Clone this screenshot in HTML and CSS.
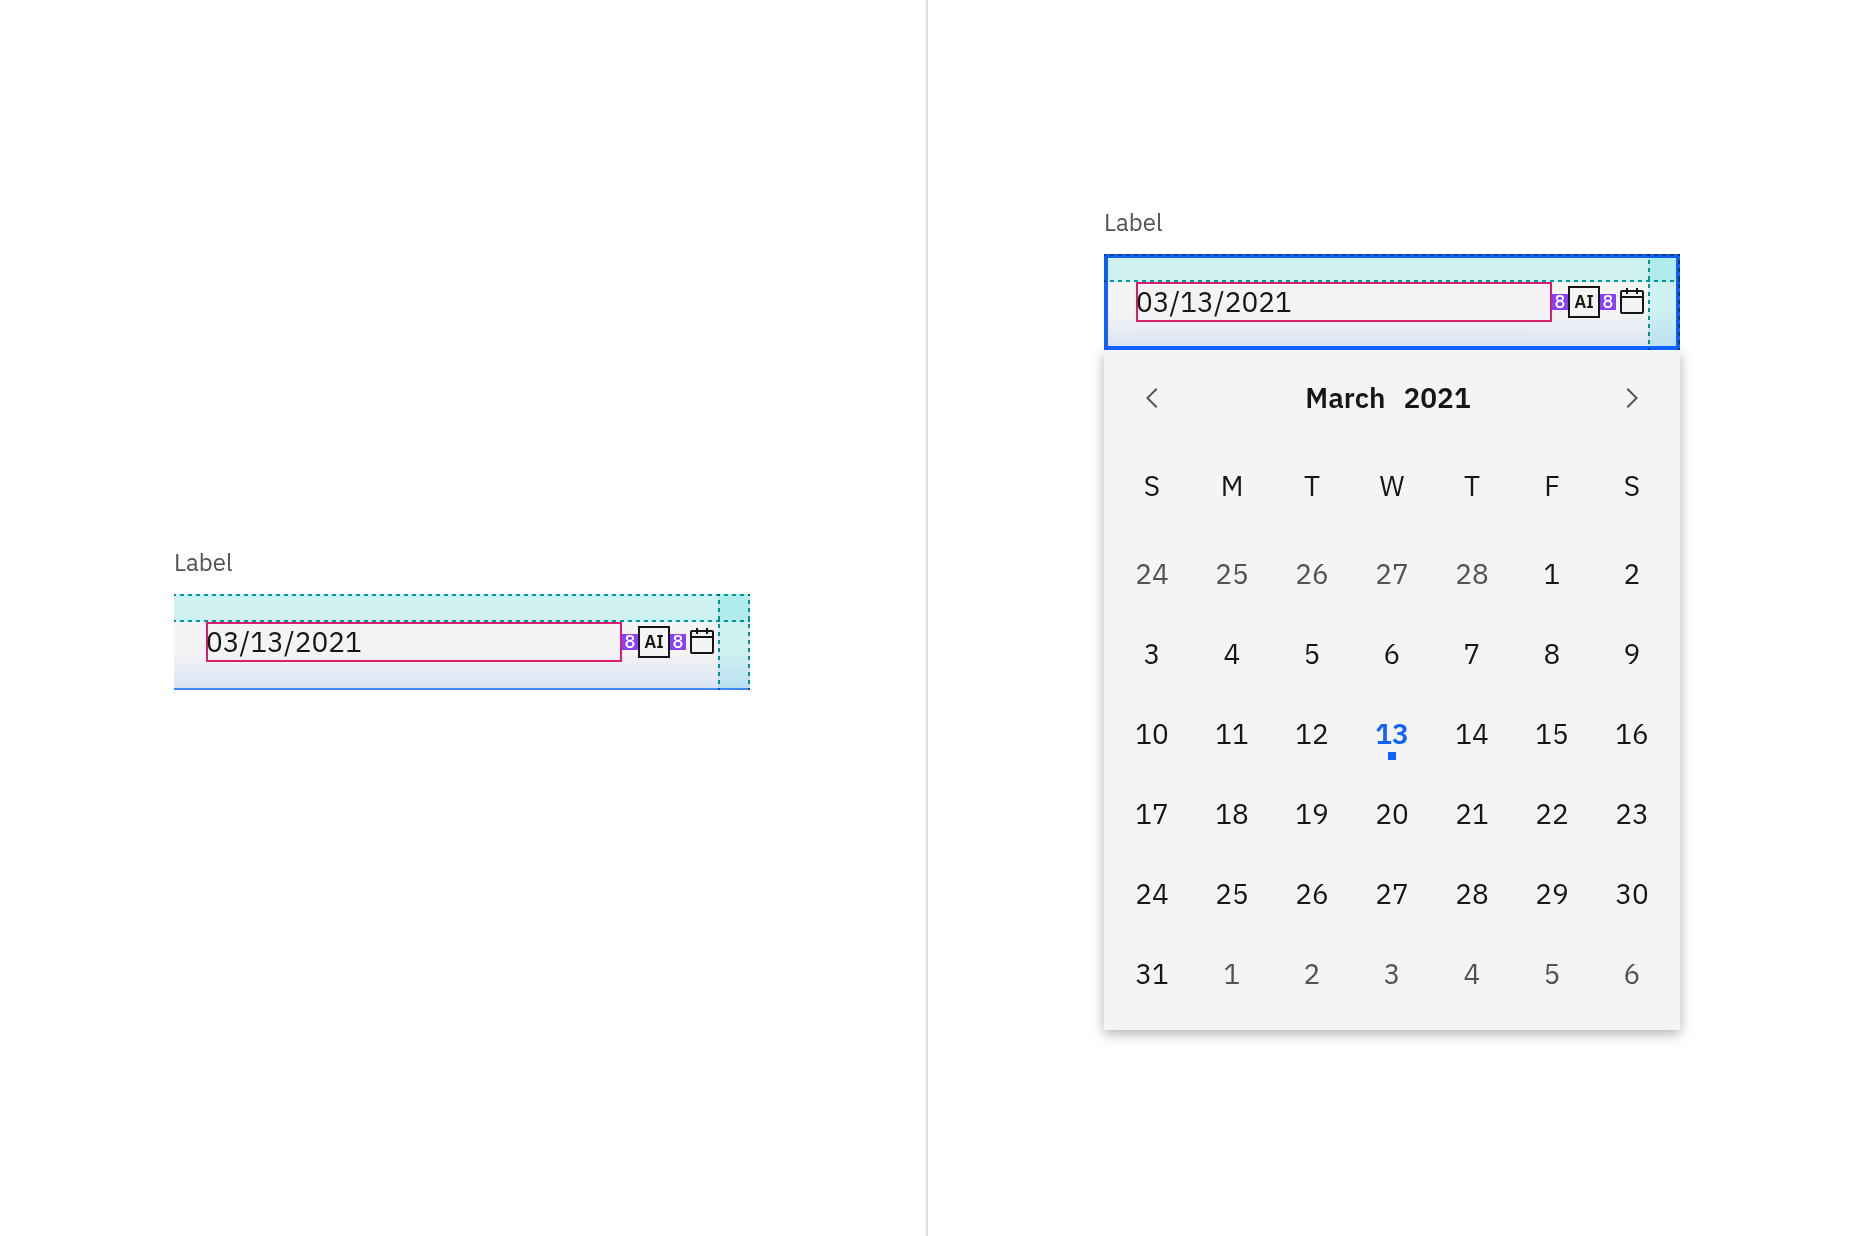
FILE: index.html
```html
<!DOCTYPE html>
<html lang="en">
<head>
<meta charset="utf-8">
<title>Date picker with AI label</title>
<link rel="stylesheet" href="styles.css">
</head>
<body>
<main class="panes">
  <section class="pane">
    <div class="picker">
      <label class="picker-label" for="date-closed">Label</label>
      <div class="field">
        <input class="date" id="date-closed" type="text" value="03/13/2021">
        <span class="space">8</span>
        <button class="ai" type="button">AI</button>
        <span class="space">8</span>
        <button class="open" type="button" aria-label="Open calendar">
          <svg viewBox="0 0 32 32" width="32" height="32"><path d="M26,4h-4V2h-2v2h-8V2h-2v2H6C4.9,4,4,4.9,4,6v20c0,1.1,0.9,2,2,2h20c1.1,0,2-0.9,2-2V6C28,4.9,27.1,4,26,4z M26,26H6V12h20V26z M26,10H6V6h4v2h2V6h8v2h2V6h4V10z"/></svg>
        </button>
        <span class="guide guide-top"></span>
        <span class="guide guide-end"></span>
      </div>
    </div>
  </section>
  <section class="pane">
    <div class="picker">
      <label class="picker-label" for="date-open">Label</label>
      <div class="field field-focus">
        <input class="date" id="date-open" type="text" value="03/13/2021">
        <span class="space">8</span>
        <button class="ai" type="button">AI</button>
        <span class="space">8</span>
        <button class="open" type="button" aria-label="Close calendar">
          <svg viewBox="0 0 32 32" width="32" height="32"><path d="M26,4h-4V2h-2v2h-8V2h-2v2H6C4.9,4,4,4.9,4,6v20c0,1.1,0.9,2,2,2h20c1.1,0,2-0.9,2-2V6C28,4.9,27.1,4,26,4z M26,26H6V12h20V26z M26,10H6V6h4v2h2V6h8v2h2V6h4V10z"/></svg>
        </button>
        <span class="guide guide-top"></span>
        <span class="guide guide-end"></span>
      </div>
      <div class="calendar">
        <div class="month">
          <button class="step" type="button" aria-label="Previous month">
            <svg viewBox="0 0 32 32" width="32" height="32"><path d="M10 16 20 6l1.4 1.4-8.6 8.6 8.6 8.6L20 26z"/></svg>
          </button>
          <h2 class="month-name"><span>March</span><span>2021</span></h2>
          <button class="step" type="button" aria-label="Next month">
            <svg viewBox="0 0 32 32" width="32" height="32"><path d="M22 16 12 26l-1.4-1.4 8.6-8.6-8.6-8.6L12 6z"/></svg>
          </button>
        </div>
        <table class="days">
          <thead>
            <tr><th>S</th><th>M</th><th>T</th><th>W</th><th>T</th><th>F</th><th>S</th></tr>
          </thead>
          <tbody>
            <tr><td class="other">24</td><td class="other">25</td><td class="other">26</td><td class="other">27</td><td class="other">28</td><td>1</td><td>2</td></tr>
            <tr><td>3</td><td>4</td><td>5</td><td>6</td><td>7</td><td>8</td><td>9</td></tr>
            <tr><td>10</td><td>11</td><td>12</td><td class="today">13</td><td>14</td><td>15</td><td>16</td></tr>
            <tr><td>17</td><td>18</td><td>19</td><td>20</td><td>21</td><td>22</td><td>23</td></tr>
            <tr><td>24</td><td>25</td><td>26</td><td>27</td><td>28</td><td>29</td><td>30</td></tr>
            <tr><td>31</td><td class="other">1</td><td class="other">2</td><td class="other">3</td><td class="other">4</td><td class="other">5</td><td class="other">6</td></tr>
          </tbody>
        </table>
      </div>
    </div>
  </section>
</main>
</body>
</html>
```
FILE: styles.css
```css
* {
  box-sizing: border-box;
}

body {
  margin: 0;
  background: #fff;
  color: #161616;
  font-family: "IBM Plex Sans", "Noto Sans", sans-serif;
  font-size: 28px;
  line-height: 40px;
}

button {
  padding: 0;
  border: 0;
  background: none;
  color: inherit;
  font: inherit;
}

svg {
  display: block;
  fill: currentColor;
}

.panes {
  display: grid;
  grid-template-columns: 1fr 1fr;
  min-height: 100vh;
}

.pane {
  display: flex;
  align-items: center;
  justify-content: center;
}

.pane:first-child {
  padding-right: 2px;
  border-right: 2px solid #e0e0e0;
}

.picker {
  width: 576px;
}

.picker-label {
  display: block;
  margin-bottom: 16px;
  color: #525252;
  font-size: 24px;
  line-height: 32px;
}

.field {
  position: relative;
  display: flex;
  align-items: center;
  height: 96px;
  padding: 0 32px;
  background: linear-gradient(to top, #d9e2f5, #f4f4f4 40%);
  box-shadow: inset 0 -2px #4589ff;
}

.field-focus {
  z-index: 1;
  box-shadow: inset 0 0 0 4px #0f62fe;
}

.date {
  flex: 1;
  min-width: 0;
  height: 40px;
  padding: 0;
  border: 0;
  border-radius: 0;
  background: none;
  box-shadow: inset 0 0 0 2px #da1e6f;
  color: inherit;
  font: inherit;
  outline: 0;
}

.space {
  width: 16px;
  background: #8a3ffc;
  color: #fff;
  font-size: 18px;
  font-weight: 500;
  line-height: 16px;
  text-align: center;
}

.ai {
  width: 32px;
  height: 32px;
  border: 2px solid #161616;
  font-size: 18px;
  font-weight: 600;
  line-height: 28px;
}

.guide {
  position: absolute;
  top: 0;
  right: 0;
  mix-blend-mode: multiply;
  pointer-events: none;
}

.guide-top {
  left: 0;
  height: 28px;
  --dash: repeating-linear-gradient(to right, #009d9a 0 2px, transparent 2px 6px, #009d9a 6px 8px);
  background:
    var(--dash) top / 100% 2px no-repeat,
    var(--dash) bottom / 100% 2px no-repeat,
    #d9fbfb;
}

.guide-end {
  bottom: 0;
  width: 32px;
  --dash: repeating-linear-gradient(to bottom, #009d9a 0 2px, transparent 2px 6px, #009d9a 6px 8px);
  background:
    var(--dash) left / 2px 100% no-repeat,
    var(--dash) right / 2px 100% no-repeat,
    #d9fbfb;
}

.calendar {
  padding: 8px 8px 16px;
  background: #f4f4f4;
  box-shadow: 0 4px 12px rgba(0, 0, 0, 0.3);
}

.month {
  display: flex;
  align-items: center;
  justify-content: space-between;
  height: 80px;
}

.step {
  display: grid;
  place-items: center;
  width: 80px;
  height: 80px;
  color: #525252;
}

.month-name {
  display: flex;
  gap: 18px;
  margin: 0;
  padding-right: 8px;
  font-size: 28px;
  font-weight: 600;
}

.days {
  width: 100%;
  border-collapse: collapse;
  table-layout: fixed;
}

.days th,
.days td {
  height: 80px;
  padding: 0;
  font-weight: 400;
  text-align: center;
}

.days th {
  height: 96px;
}

.days .other {
  color: #525252;
}

.days .today {
  position: relative;
  color: #0f62fe;
  font-weight: 600;
}

.today::after {
  content: "";
  position: absolute;
  bottom: 14px;
  left: 50%;
  width: 8px;
  height: 8px;
  margin-left: -4px;
  background: #0f62fe;
}
```
